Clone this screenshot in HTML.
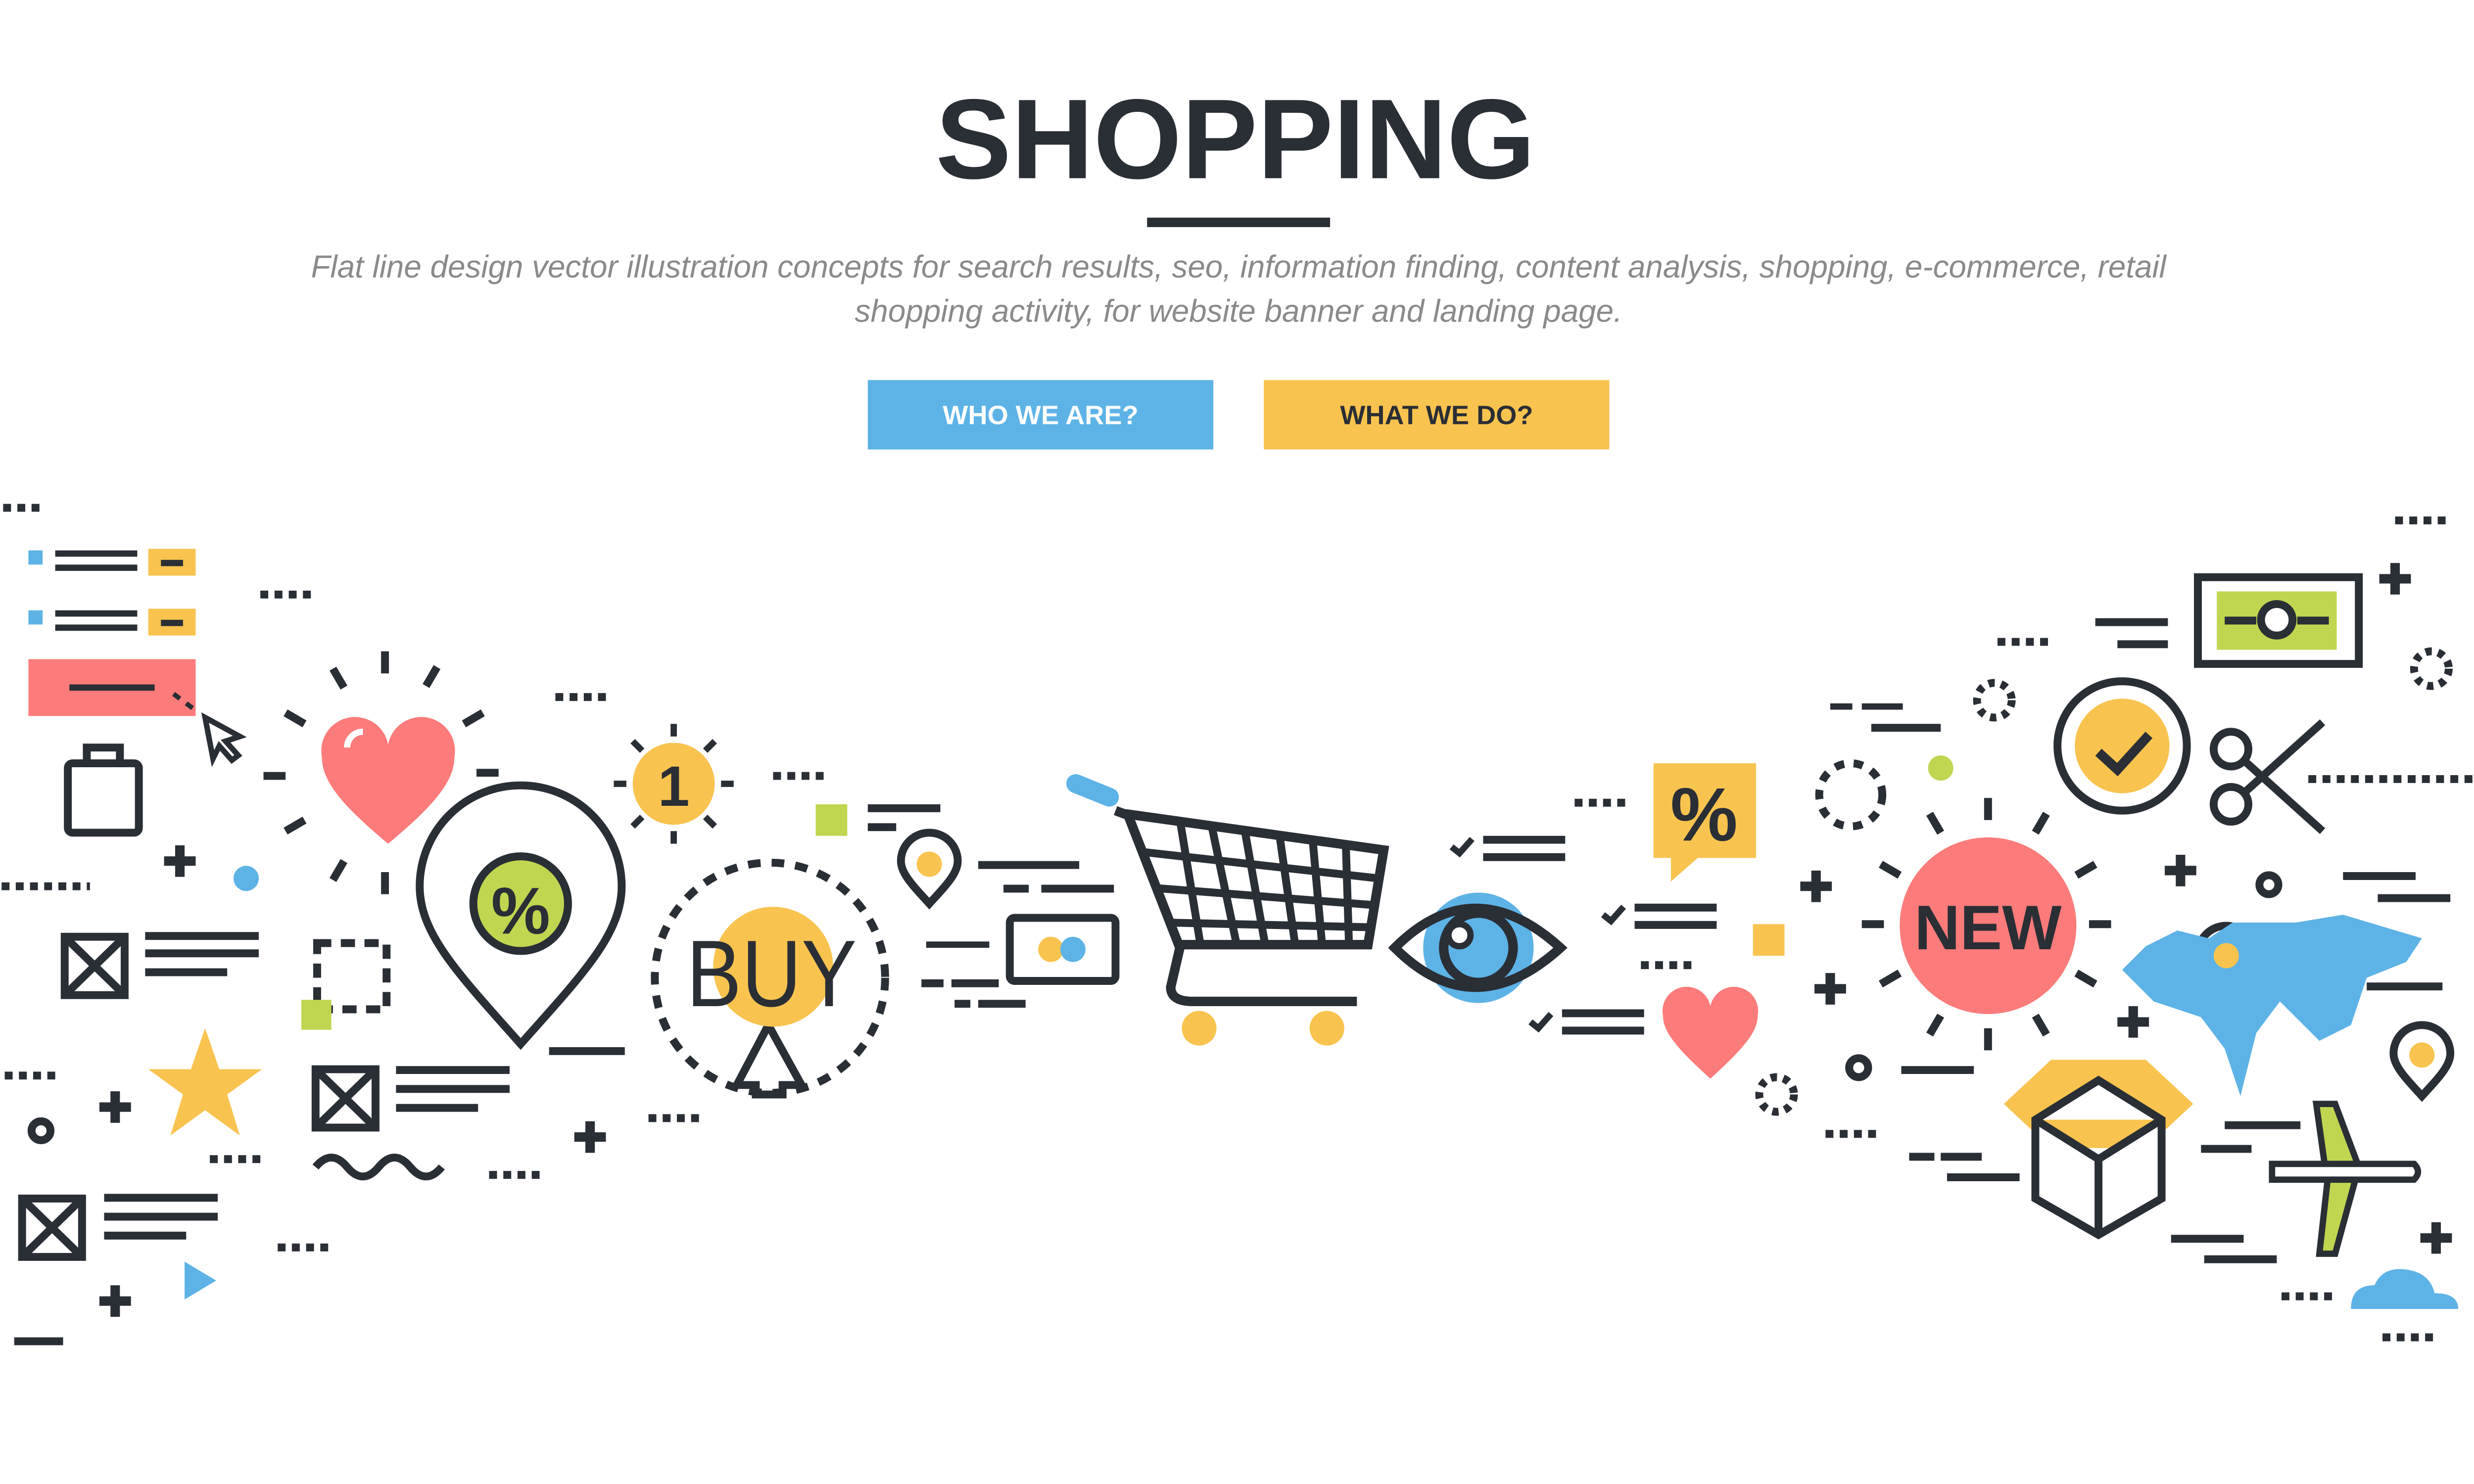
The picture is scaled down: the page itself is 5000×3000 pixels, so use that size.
<!DOCTYPE html>
<html><head><meta charset="utf-8"><style>
html,body{margin:0;padding:0;background:#fff;width:5000px;height:3000px;overflow:hidden}
svg{display:block}
</style></head><body>
<svg width="5000" height="3000" viewBox="0 0 1568 941" preserveAspectRatio="none" xmlns="http://www.w3.org/2000/svg">
<rect width="1568" height="941" fill="#fff"/>
<text x="783" y="113" text-anchor="middle" font-family="Liberation Sans, sans-serif" font-weight="bold" font-size="72" fill="#2a2e35">SHOPPING</text>
<rect x="727" y="138" width="116" height="6" fill="#2a2e35"/>
<text x="785" y="176" text-anchor="middle" font-family="Liberation Sans, sans-serif" font-style="italic" font-size="20" fill="#8a8a8a">Flat line design vector illustration concepts for search results, seo, information finding, content analysis, shopping, e-commerce, retail</text>
<text x="785" y="204" text-anchor="middle" font-family="Liberation Sans, sans-serif" font-style="italic" font-size="20" fill="#8a8a8a">shopping activity, for website banner and landing page.</text>
<rect x="550" y="241" width="219" height="44" fill="#5db3e6"/>
<text x="659.5" y="269" text-anchor="middle" font-family="Liberation Sans, sans-serif" font-weight="bold" font-size="17" fill="#fff">WHO WE ARE?</text>
<rect x="801" y="241" width="219" height="44" fill="#f8c44f"/>
<text x="910.5" y="269" text-anchor="middle" font-family="Liberation Sans, sans-serif" font-weight="bold" font-size="17" fill="#2a2e35">WHAT WE DO?</text>

<g fill="#2a2e35">
<rect x="18" y="349" width="9" height="9" fill="#5db3e6"/><rect x="35" y="349" width="52" height="4"/><rect x="35" y="358" width="52" height="4"/>
<rect x="94" y="348" width="30" height="17" fill="#f8c44f"/><rect x="102" y="355" width="14" height="4"/>
<rect x="18" y="387" width="9" height="9" fill="#5db3e6"/><rect x="35" y="387" width="52" height="4"/><rect x="35" y="396" width="52" height="4"/>
<rect x="94" y="386" width="30" height="17" fill="#f8c44f"/><rect x="102" y="393" width="14" height="4"/>
<rect x="18" y="418" width="106" height="36" fill="#fd7b7b"/><rect x="44" y="434" width="54" height="4"/>
<rect x="9" y="848" width="31" height="5"/>
</g>
<g stroke="#2a2e35" stroke-width="5" stroke-dasharray="5 4" fill="none">
<path d="M2 322h24M165 377h34M352 442h32M1 562h56M3 682h34M133 735h32M176 791h32M310 745h34M411 709h32M490 492h32M998 509h32M1040 612h34M1266 407h34M1518 330h34M1157 719h34M1446 822h34M1510 848h34M1463 494h105"/>
</g>
<g fill="none" stroke="#2a2e35" stroke-width="5">
<rect x="43" y="484" width="45" height="44" rx="3"/><path d="M55 484v-10h21v10"/>
<path d="M130 455l22 12-9 3 8 9-4 3-8-9-4 8z" stroke-width="3.5"/>
<path d="M110 440l4 3M118 446l4 3" stroke-width="3"/>
<rect x="41" y="594" width="38" height="37"/><path d="M41 594l38 37M79 594l-38 37"/>
<rect x="200" y="678" width="38" height="37"/><path d="M200 678l38 37M238 678l-38 37"/>
<rect x="14" y="760" width="38" height="37"/><path d="M14 760l38 37M52 760l-38 37"/>
<rect x="201" y="598" width="44" height="42" stroke-dasharray="9 6"/>
<path d="M200 740q10-12 20 0t20 0t20 0t20 0"/>
<circle cx="26" cy="717" r="6"/><circle cx="1178" cy="677" r="6"/><circle cx="1438" cy="561" r="6"/>
<path d="M330 662c-40-45-64-70-64-100a64 64 0 0 1 128 0c0 30-24 55-64 100z"/>
<circle cx="488" cy="620" r="73" stroke-dasharray="8 7"/>
<path d="M487 650l-20 38h12v6h17v-6h12z"/>
<path d="M589 573c-10-11-18-19-18-27a18 18 0 0 1 36 0c0 8-8 16-18 27z"/>
<rect x="640" y="582" width="67" height="40" rx="3"/>
<path d="M707 514l8 3 32 82h120l10-60-164-23" stroke-width="6"/>
<path d="M748 600l-6 26q0 9 14 9h104" stroke-width="6"/>
<path d="M722 540l152 17M731 563l141 11M740 585l130 3M748 521l13 79M768 524l16 76M789 527l13 73M811 530l10 70M832 533l6 67M853 536l2 64" stroke-width="5"/>
<rect x="1393" y="366" width="102" height="55"/>
<circle cx="1345" cy="473" r="41"/>
<circle cx="1414" cy="510" r="11"/><circle cx="1414" cy="475" r="11"/>
<path d="M1422 503l50-45M1422 482l50 45"/>
<path d="M1411 632c-10-11-18-19-18-27a18 18 0 0 1 36 0c0 8-8 16-18 27z"/>
<path d="M1535 695c-10-11-18-19-18-27a18 18 0 0 1 36 0c0 8-8 16-18 27z"/>
<circle cx="1264" cy="444" r="11" stroke-dasharray="4 4"/><circle cx="1126" cy="694" r="11" stroke-dasharray="4 4"/>
<circle cx="1541" cy="424" r="11" stroke-dasharray="4 4"/><circle cx="1173" cy="504" r="20" stroke-dasharray="6 6"/>
<path d="M920 537l5 4 8-9M1016 580l5 4 8-9M970 648l5 4 8-9" stroke-width="4"/>
<path d="M244 413v14M277 423l-7 12M306 452l-12 7M316 490h-14M211 424l7 12M181 452l12 7M167 492h14M181 527l12-7M211 558l7-12M244 567v-14" stroke-width="5"/>
<path d="M1260 506v14M1297 516l-7 12M1328 548l-12 7M1338 586h-14M1223 516l7 12M1192 548l12 7M1180 586h14M1192 624l12-7M1223 656l7-12M1260 666v-14M1297 656l-7-12M1328 624l-12-7" stroke-width="5"/>
<path d="M427 459v8M453 470l-6 6M465 497h-8M453 524l-6-6M401 470l6 6M389 497h8M401 524l6-6M427 535v-8" stroke-width="4"/>
</g>
<g fill="#2a2e35">
<rect x="92" y="591" width="72" height="5"/><rect x="92" y="602" width="72" height="5"/><rect x="92" y="614" width="52" height="5"/>
<rect x="251" y="676" width="72" height="5"/><rect x="251" y="688" width="72" height="5"/><rect x="251" y="700" width="52" height="5"/>
<rect x="66" y="757" width="72" height="5"/><rect x="66" y="769" width="72" height="5"/><rect x="66" y="781" width="52" height="5"/>
<rect x="348" y="664" width="48" height="5"/>
<rect x="550" y="510" width="46" height="5"/><rect x="550" y="522" width="18" height="5"/>
<rect x="620" y="546" width="64" height="5"/><rect x="636" y="561" width="16" height="5"/><rect x="660" y="561" width="46" height="5"/>
<rect x="587" y="597" width="40" height="4"/><rect x="584" y="621" width="14" height="5"/><rect x="603" y="621" width="30" height="5"/><rect x="605" y="634" width="10" height="5"/><rect x="620" y="634" width="30" height="5"/>
<rect x="940" y="530" width="52" height="5"/><rect x="940" y="541" width="52" height="5"/>
<rect x="1036" y="573" width="52" height="5"/><rect x="1036" y="584" width="52" height="5"/>
<rect x="990" y="640" width="52" height="5"/><rect x="990" y="651" width="52" height="5"/>
<rect x="1328" y="392" width="46" height="5"/><rect x="1342" y="406" width="32" height="5"/>
<rect x="1160" y="446" width="14" height="4"/><rect x="1180" y="446" width="26" height="4"/><rect x="1186" y="459" width="44" height="5"/>
<rect x="1485" y="553" width="46" height="5"/><rect x="1507" y="567" width="46" height="5"/>
<rect x="1500" y="623" width="48" height="5"/>
<rect x="1205" y="676" width="46" height="5"/><rect x="1210" y="731" width="16" height="5"/><rect x="1230" y="731" width="26" height="5"/><rect x="1234" y="744" width="46" height="5"/>
<rect x="1395" y="726" width="32" height="5"/><rect x="1410" y="711" width="48" height="5"/>
<rect x="1376" y="783" width="46" height="5"/><rect x="1397" y="796" width="46" height="5"/>
<path d="M111 536h6v7h7v6h-7v7h-6v-7h-7v-6h7z M70 692h6v7h7v6h-7v7h-6v-7h-7v-6h7z M70 815h6v7h7v6h-7v7h-6v-7h-7v-6h7z M371 711h6v7h7v6h-7v7h-6v-7h-7v-6h7z M1148 552h6v7h7v6h-7v7h-6v-7h-7v-6h7z M1157 617h6v7h7v6h-7v7h-6v-7h-7v-6h7z M1379 542h6v7h7v6h-7v7h-6v-7h-7v-6h7z M1349 638h6v7h7v6h-7v7h-6v-7h-7v-6h7z M1515 357h6v7h7v6h-7v7h-6v-7h-7v-6h7z M1541 775h6v7h7v6h-7v7h-6v-7h-7v-6h7z"/>
</g>
<path d="M246 535c-30-25-42-40-42-55a20 20 0 0 1 42-8a20 20 0 0 1 42 8c0 15-12 30-42 55z" fill="#fd7b7b"/>
<path d="M220 474a10 10 0 0 1 10-10" stroke="#fff" stroke-width="4" fill="none"/>
<circle cx="156" cy="557" r="8" fill="#5db3e6"/>
<path d="M130 652l9 26h27l-22 16 8 26-22-16-22 16 8-26-22-16h27z" fill="#f8c44f"/>
<path d="M117 800l20 12-20 12z" fill="#5db3e6"/>
<rect x="191" y="634" width="19" height="19" fill="#c0d650"/>
<rect x="517" y="510" width="20" height="20" fill="#c0d650"/>
<circle cx="330" cy="573" r="30" fill="#c0d650" stroke="#2a2e35" stroke-width="5"/>
<text x="330" y="592" text-anchor="middle" font-family="Liberation Sans, sans-serif" font-weight="bold" font-size="42" fill="#2a2e35">%</text>
<circle cx="427" cy="497" r="26" fill="#f8c44f"/>
<text x="427" y="511" text-anchor="middle" font-family="Liberation Sans, sans-serif" font-weight="bold" font-size="36" fill="#2a2e35">1</text>
<circle cx="490" cy="613" r="38" fill="#f8c44f"/>
<text x="489" y="638" text-anchor="middle" font-family="Liberation Sans, sans-serif" font-size="60" textLength="108" lengthAdjust="spacingAndGlyphs" fill="#2a2e35">BUY</text>
<circle cx="589" cy="548" r="8" fill="#f8c44f"/>
<circle cx="666" cy="602" r="8" fill="#f8c44f"/><circle cx="680" cy="602" r="8" fill="#5db3e6"/>
<rect x="675" y="495" width="35" height="12" rx="6" transform="rotate(22 692 501)" fill="#5db3e6"/>
<circle cx="760" cy="652" r="11" fill="#f8c44f"/><circle cx="841" cy="652" r="11" fill="#f8c44f"/>
<circle cx="937" cy="601" r="35" fill="#5db3e6"/>
<path d="M884 601q50-50 105 0q-55 50-105 0z" fill="none" stroke="#2a2e35" stroke-width="6"/>
<circle cx="937" cy="601" r="22" fill="none" stroke="#2a2e35" stroke-width="6"/>
<circle cx="925" cy="593" r="7" fill="#fff" stroke="#2a2e35" stroke-width="4"/>
<path d="M1048 484h65v60h-37l-17 15v-15h-11z" fill="#f8c44f"/>
<text x="1080" y="533" text-anchor="middle" font-family="Liberation Sans, sans-serif" font-weight="bold" font-size="48" fill="#2a2e35">%</text>
<rect x="1111" y="586" width="20" height="20" fill="#f8c44f"/>
<path d="M1084 684c-22-20-30-30-30-40a15 15 0 0 1 30-6a15 15 0 0 1 30 6c0 10-8 20-30 40z" fill="#fd7b7b"/>
<circle cx="1230" cy="487" r="8" fill="#c0d650"/>
<circle cx="1260" cy="587" r="56" fill="#fd7b7b"/>
<text x="1260" y="602" text-anchor="middle" font-family="Liberation Sans, sans-serif" font-weight="bold" font-size="40" fill="#2a2e35">NEW</text>
<rect x="1405" y="375" width="76" height="37" fill="#c0d650"/>
<rect x="1410" y="391" width="20" height="5" fill="#2a2e35"/><rect x="1456" y="391" width="20" height="5" fill="#2a2e35"/>
<circle cx="1443" cy="393" r="10" fill="#fff" stroke="#2a2e35" stroke-width="5"/>
<circle cx="1345" cy="473" r="30" fill="#f8c44f"/>
<path d="M1330 477l12 11 20-22" fill="none" stroke="#2a2e35" stroke-width="6"/>
<path d="M1360 600l20-10 20 5 15-10 40 0 30-5 50 15-10 15-25 10-10 30-20 10-25-25-15 20-10 40-10-30-15-20-30-10-20-20z" fill="#5db3e6"/>
<circle cx="1411" cy="606" r="8" fill="#f8c44f"/><circle cx="1535" cy="669" r="8" fill="#f8c44f"/>
<path d="M1270 700l30-28 60 0 30 28-30 28-60 0z" fill="#f8c44f"/>
<path d="M1290 710l40-25 40 25v50l-40 23-40-23z M1290 710l40 25 40-25 M1330 735v48" fill="#fff" stroke="#2a2e35" stroke-width="5"/>
<path d="M1468 700l12 0 15 40-15 55h-10l5-45z" fill="#c0d650" stroke="#2a2e35" stroke-width="4"/>
<path d="M1440 738h90q5 5 0 10h-90z" fill="#fff" stroke="#2a2e35" stroke-width="4"/>
<path d="M1490 830q0-15 15-15q5-12 20-10q15 2 18 15q15 0 15 10z" fill="#5db3e6"/>
</svg>
</body></html>
